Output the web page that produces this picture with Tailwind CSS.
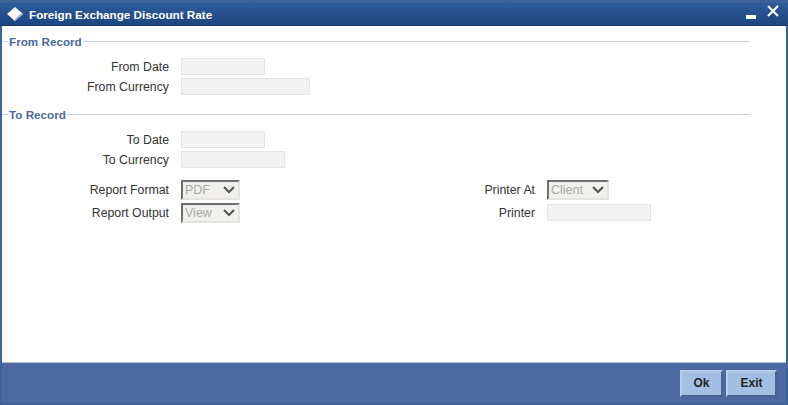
<!doctype html>
<html>
<head>
  <meta charset="UTF-8">
  <script src="https://cdn.jsdelivr.net/npm/@tailwindcss/browser@4"></script>
</head>
<body class="bg-white">
<div class="flex flex-col w-[788px] h-[405px] overflow-hidden bg-[#3f6298] font-['Liberation_Sans',sans-serif] text-[12.3px] leading-[17px] text-[#333333]">

  <!-- Title bar -->
  <div class="flex items-center h-[26px] shrink-0 pl-[7px] pr-[9px] border-b border-[#173a6b] border-t-[3px] border-t-[#3d6299] bg-gradient-to-b from-[#2f5b9c] to-[#1d4680]">
    <svg class="w-[16px] h-[14px]" viewBox="0 0 16 14"><path d="M8 0 L16 7 L8 14 L0 7 Z" fill="#ffffff"/><path d="M8 14 L16 7 L13 7 L8 12 Z" fill="#9db2cf"/></svg>
    <span class="ml-[6px] text-[11.7px] font-bold text-white">Foreign Exchange Discount Rate</span>
    <svg class="ml-auto w-[10px] h-[4px] mt-[5px]" viewBox="0 0 10 4"><rect width="10" height="4" fill="#ffffff"/></svg>
    <svg class="ml-[11px] mb-[7px] w-[12px] h-[12px]" viewBox="0 0 12 12"><path d="M1 1 L11 11 M11 1 L1 11" stroke="#ffffff" stroke-width="2"/></svg>
  </div>

  <!-- Content -->
  <div class="flex-1 mx-[2px] bg-white border-b border-[#b4c3dc] pt-[7px]">
    <!-- From Record -->
    <div class="flex items-center h-[16px] pr-[36px]">
      <div class="w-[6px] h-px bg-[#c5d2de]"></div>
      <span class="text-[11.7px] text-[#4a6a9a] font-bold px-[1px]">From Record</span>
      <div class="flex-1 h-px bg-[#c5d2de]"></div>
    </div>
    <div class="flex flex-col gap-[3px] mt-[9px]">
      <div class="flex items-center h-[17px]">
        <label class="w-[167px] text-right pt-px">From Date</label>
        <div class="ml-[12px] w-[84px] h-[17px] bg-[#f2f2f2] border border-[#e4e4e4]"></div>
      </div>
      <div class="flex items-center h-[17px]">
        <label class="w-[167px] text-right pt-px">From Currency</label>
        <div class="ml-[12px] w-[129px] h-[17px] bg-[#f2f2f2] border border-[#e4e4e4]"></div>
      </div>
    </div>

    <!-- To Record -->
    <div class="flex items-center h-[16px] pr-[36px] mt-[11px]">
      <div class="w-[6px] h-px bg-[#c5d2de]"></div>
      <span class="text-[11.7px] text-[#4a6a9a] font-bold px-[1px]">To Record</span>
      <div class="flex-1 h-px bg-[#c5d2de]"></div>
    </div>
    <div class="flex flex-col gap-[3px] mt-[9px]">
      <div class="flex items-center h-[17px]">
        <label class="w-[167px] text-right pt-px">To Date</label>
        <div class="ml-[12px] w-[84px] h-[17px] bg-[#f2f2f2] border border-[#e4e4e4]"></div>
      </div>
      <div class="flex items-center h-[17px]">
        <label class="w-[167px] text-right pt-px">To Currency</label>
        <div class="ml-[12px] w-[104px] h-[17px] bg-[#f2f2f2] border border-[#e4e4e4]"></div>
      </div>
    </div>

    <!-- Report options -->
    <div class="flex mt-[12px]">
      <div class="flex flex-col gap-[3px] w-[366px]">
        <div class="flex items-center">
          <label class="w-[167px] text-right">Report Format</label>
          <div class="ml-[12px] flex items-center justify-between w-[59px] h-[20px] pl-[2px] pr-[3px] bg-[#f1f0ec] border-2 border-[#e4e3de] border-t-[#6e6e6e] border-l-[#6e6e6e] text-[12.5px] text-[#a8a8a8]">
            <span class="pt-px">PDF</span>
            <svg class="w-[12px] h-[8px]" viewBox="0 0 12 8"><path d="M1 1 L6 6 L11 1" fill="none" stroke="#555555" stroke-width="2"/></svg>
          </div>
        </div>
        <div class="flex items-center">
          <label class="w-[167px] text-right">Report Output</label>
          <div class="ml-[12px] flex items-center justify-between w-[59px] h-[20px] pl-[2px] pr-[3px] bg-[#f1f0ec] border-2 border-[#e4e3de] border-t-[#6e6e6e] border-l-[#6e6e6e] text-[12.5px] text-[#a8a8a8]">
            <span class="pt-px">View</span>
            <svg class="w-[12px] h-[8px]" viewBox="0 0 12 8"><path d="M1 1 L6 6 L11 1" fill="none" stroke="#555555" stroke-width="2"/></svg>
          </div>
        </div>
      </div>
      <div class="flex flex-col gap-[3px]">
        <div class="flex items-center">
          <label class="w-[167px] text-right">Printer At</label>
          <div class="ml-[12px] flex items-center justify-between w-[62px] h-[20px] pl-[2px] pr-[3px] bg-[#f1f0ec] border-2 border-[#e4e3de] border-t-[#6e6e6e] border-l-[#6e6e6e] text-[12.5px] text-[#a8a8a8]">
            <span class="pt-px">Client</span>
            <svg class="w-[12px] h-[8px]" viewBox="0 0 12 8"><path d="M1 1 L6 6 L11 1" fill="none" stroke="#555555" stroke-width="2"/></svg>
          </div>
        </div>
        <div class="flex items-center h-[20px]">
          <label class="w-[167px] text-right">Printer</label>
          <div class="ml-[12px] w-[104px] h-[17px] self-start mt-px bg-[#f2f2f2] border border-[#e4e4e4]"></div>
        </div>
      </div>
    </div>
  </div>

  <!-- Footer -->
  <div class="flex justify-end items-start gap-[3px] h-[42px] shrink-0 mx-[2px] pr-[9px] pt-[7px] bg-[#4c6a9f] border-b-2 border-[#3f6298]">
    <button class="w-[43px] h-[27px] bg-[#a3c0e4] border-2 border-[#b8cfeb] border-r-[#486491] border-b-[#486491] text-[12px] font-bold text-[#222222]">Ok</button>
    <button class="w-[51px] h-[27px] bg-[#a3c0e4] border-2 border-[#b8cfeb] border-r-[#486491] border-b-[#486491] text-[12px] font-bold text-[#222222]">Exit</button>
  </div>
</div>
</body>
</html>
